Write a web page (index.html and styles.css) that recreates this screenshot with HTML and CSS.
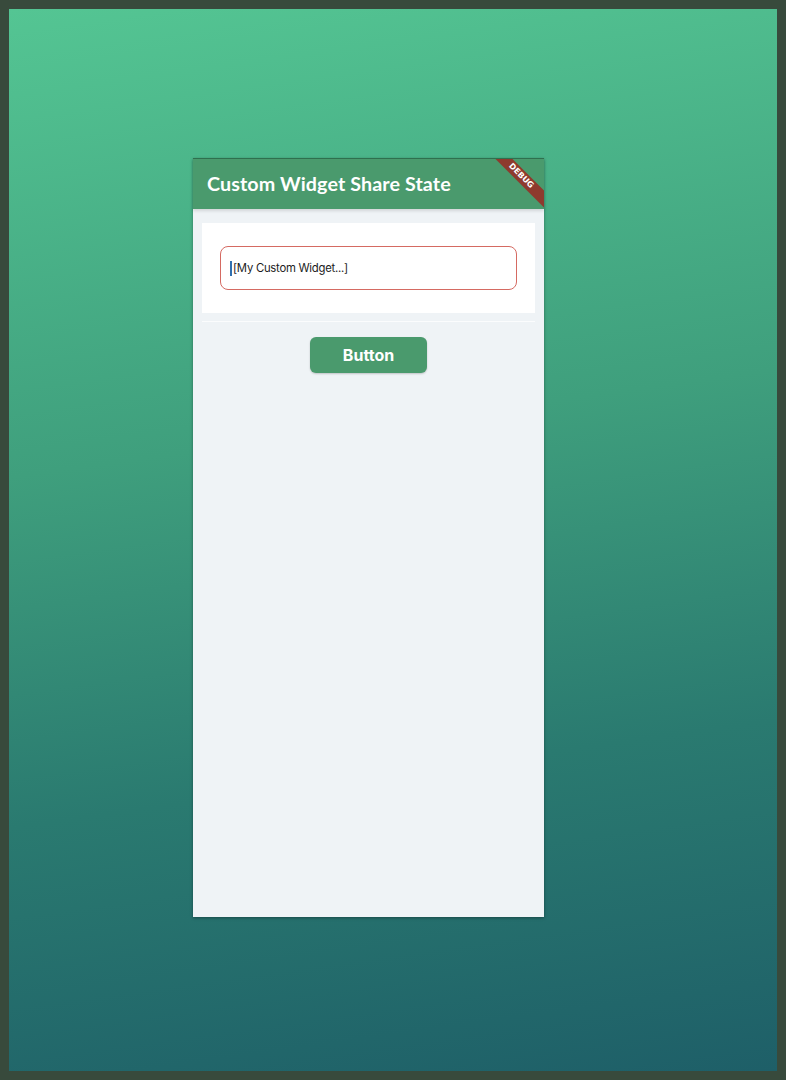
FILE: index.html
```html
<!DOCTYPE html>
<html lang="en">
<head>
  <meta charset="UTF-8">
  <title>Custom Widget Share State</title>
  <link rel="stylesheet" href="styles.css">
</head>
<body>

  <div class="backdrop">
    <div class="phone">
      <div class="appbar">
        <h1>Custom Widget Share State</h1>
        <div class="debug">DEBUG</div>
      </div>
      <div class="content">
        <div class="card">
          <div class="field">
            <span class="caret"></span>[My Custom Widget...]
          </div>
        </div>
        <div class="divider"></div>
        <button class="btn">Button</button>
      </div>
    </div>
  </div>

</body>
</html>
```

FILE: styles.css
```css
* {
  box-sizing: border-box;
}
html, body {
  margin: 0;
  height: 100%;
}
body {
  background: #384a3c;
  padding: 9px;
  font-family: 'Inter', 'Noto Sans', sans-serif;
}
.backdrop {
  height: 100%;
  background: linear-gradient(172deg, #54c593 0%, #3f9f7d 40%, #2a7a70 70%, #1e5f68 100%);
  padding: 149px 0 0 184px;
}
.phone {
  width: 351px;
  height: 759px;
  background: #eff3f6;
  box-shadow: 0 1px 3px rgba(0,0,0,0.35);
  display: flex;
  flex-direction: column;
}
.appbar {
  position: relative;
  overflow: hidden;
  height: 51px;
  background: #4a9a6d;
  border-top: 1px solid #2f6f4e;
  display: flex;
  align-items: center;
  padding-left: 14px;
  padding-bottom: 1px;
  box-shadow: 0 2px 3px rgba(0,0,0,0.12);
}
.appbar h1 {
  margin: 0;
  color: #fff;
  font-family: 'Lato', sans-serif;
  font-weight: 700;
  font-size: 19.7px;
  letter-spacing: 0.1px;
}
.debug {
  position: absolute;
  top: 11px;
  right: -22px;
  width: 90px;
  transform: rotate(45deg);
  background: #8e3a2e;
  color: #fff;
  font-family: 'DejaVu Sans', sans-serif;
  font-weight: bold;
  font-size: 8px;
  text-align: center;
  line-height: 12px;
}
.content {
  padding: 14px 9px 0;
  display: flex;
  flex-direction: column;
  align-items: center;
}
.card {
  width: 100%;
  background: #fff;
  padding: 23px 18px;
}
.field {
  height: 44px;
  border: 1px solid #d56a62;
  border-radius: 8px;
  display: flex;
  align-items: center;
  padding-left: 9px;
  font-size: 11.3px;
  color: #1c1c1c;
  letter-spacing: -0.25px;
}
.caret {
  width: 2px;
  height: 15px;
  background: #2f6fb0;
  margin-right: 1px;
}
.divider {
  width: 100%;
  height: 1px;
  background: #fbfcfd;
  margin-top: 8px;
}
.btn {
  margin-top: 15px;
  width: 117px;
  height: 36px;
  background: #4a9a6d;
  color: #fff;
  border: none;
  border-radius: 6px;
  font-family: 'Inter', sans-serif;
  font-weight: 700;
  font-size: 16px;
  box-shadow: 0 1px 2px rgba(0,0,0,0.2);
}
```
